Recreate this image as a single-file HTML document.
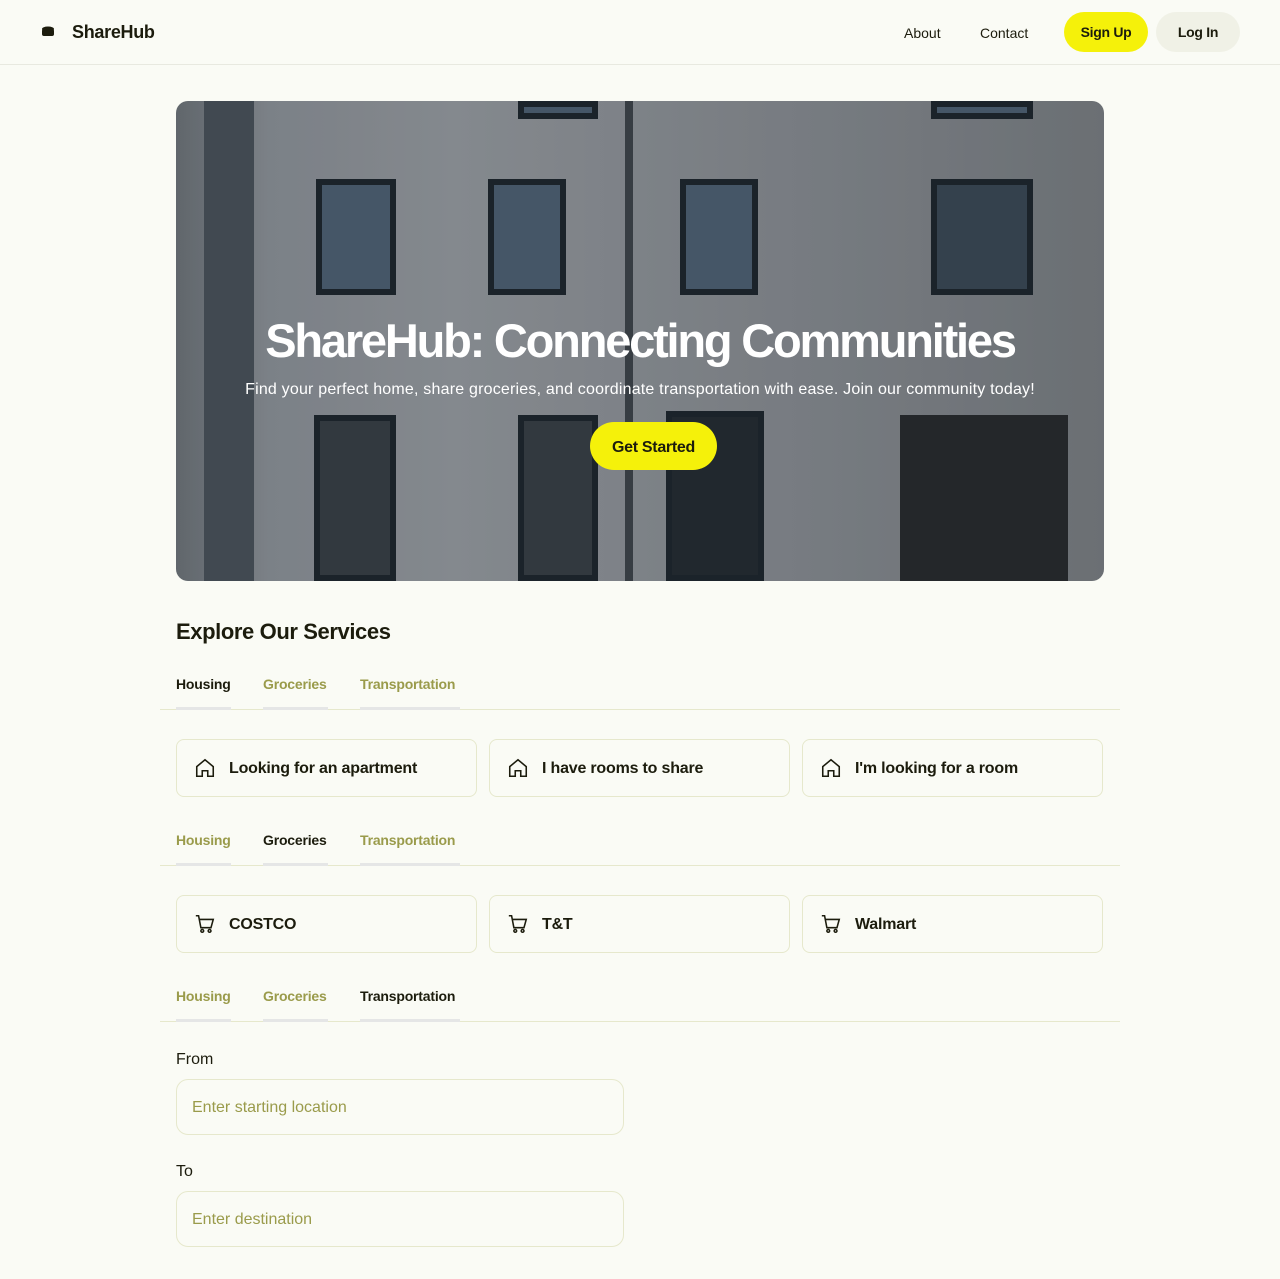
<!DOCTYPE html>
<html><head><meta charset="utf-8"><style>
*{box-sizing:border-box;margin:0;padding:0}
body{width:1280px;height:1279px;background:#fafbf5;font-family:"Liberation Sans",sans-serif;color:#1c1c0d;position:relative;overflow:hidden}
.hdr{height:65px;border-bottom:1px solid #e8e9e0;position:relative}
.logo{position:absolute;left:72px;top:22px;font-weight:bold;font-size:18px;letter-spacing:-0.3px}
.nav{position:absolute;top:25px;font-size:14px}
.btn{position:absolute;top:12px;height:40px;border-radius:20px;font-weight:bold;font-size:14px;display:flex;align-items:center;justify-content:center;letter-spacing:-0.3px}
.hero{position:absolute;left:176px;top:101px;width:928px;height:480px;border-radius:12px;overflow:hidden;background:linear-gradient(90deg,#6e757b 0,#8d939a 10%,#979ca2 30%,#8d9298 55%,#858a90 75%,#7a7f84 100%)}
.w{position:absolute;background:#4f6276;border:6px solid #1f2830}
.ov{position:absolute;inset:0;background:rgba(0,0,0,.12)}
h1{position:absolute;left:0;right:0;top:212px;text-align:center;color:#fff;font-size:47px;letter-spacing:-2.2px;font-weight:bold}
.sub{position:absolute;left:0;right:0;top:280px;text-align:center;color:#fff;font-size:16px;letter-spacing:0.2px}
.gs{position:absolute;left:414px;top:321px;width:127px;height:48px;border-radius:24px;background:#f5f10a;font-weight:bold;font-size:16px;display:flex;align-items:center;justify-content:center;padding-top:4px;letter-spacing:-0.3px}
h2{position:absolute;left:176px;top:619px;font-size:22px;font-weight:bold;letter-spacing:-0.4px}
.tabs{position:absolute;left:160px;width:960px;height:40px;border-bottom:1px solid #e6e8cc}
.t{position:absolute;top:6px;font-size:14px;font-weight:bold;color:#9a9b4b;height:34px;border-bottom:3px solid #e5e6e6;letter-spacing:-0.2px}
.t.a{color:#1c1c0d}
.card{position:absolute;width:301px;height:58px;border:1px solid #e6e8cc;border-radius:8px;display:flex;align-items:center;padding-left:17px;padding-top:2px;font-weight:bold;font-size:16px;letter-spacing:-0.2px}
.card svg{margin-right:13px;margin-top:-2px}
.lbl{position:absolute;left:176px;font-size:16px}
.inp{position:absolute;left:176px;width:448px;height:56px;border:1px solid #e6e8cc;border-radius:12px;color:#9a9b4b;font-size:16px;padding:19px 15px}
</style></head><body>
<div class="hdr">
<svg style="position:absolute;left:42px;top:26px" width="12" height="12" viewBox="0 0 12 12"><ellipse cx="6" cy="3" rx="6" ry="2.5" fill="#1c1c0d"/><rect x="0" y="3" width="12" height="7" rx="2" fill="#1c1c0d"/></svg>
<div class="logo">ShareHub</div>
<div class="nav" style="left:904px">About</div>
<div class="nav" style="left:980px">Contact</div>
<div class="btn" style="left:1064px;width:84px;background:#f5f10a">Sign Up</div>
<div class="btn" style="left:1156px;width:84px;background:#f0f1e6">Log In</div>
</div>
<div class="hero">
<div style="position:absolute;left:28px;top:0;width:50px;height:480px;background:#4b545d"></div>
<div style="position:absolute;left:449px;top:0;width:8px;height:480px;background:#3f464d"></div>
<div class="w" style="left:140px;top:78px;width:80px;height:116px"></div>
<div class="w" style="left:312px;top:78px;width:78px;height:116px"></div>
<div class="w" style="left:504px;top:78px;width:78px;height:116px"></div>
<div class="w" style="left:755px;top:78px;width:102px;height:116px;background:#3c4a58"></div>
<div class="w" style="left:342px;top:0;width:80px;height:18px"></div>
<div class="w" style="left:755px;top:0;width:102px;height:18px"></div>
<div class="w" style="left:138px;top:314px;width:82px;height:166px;background:#3a4148"></div>
<div class="w" style="left:342px;top:314px;width:80px;height:166px;background:#3a4148"></div>
<div class="w" style="left:490px;top:310px;width:98px;height:170px;background:#262e35"></div>
<div style="position:absolute;left:724px;top:314px;width:168px;height:166px;background:#2a2d30"></div>
<div class="ov"></div>
<h1>ShareHub: Connecting Communities</h1>
<div class="sub">Find your perfect home, share groceries, and coordinate transportation with ease. Join our community today!</div>
<div class="gs">Get Started</div>
</div>
<h2>Explore Our Services</h2>

<div class="tabs" style="top:670px"><div class="t a" style="left:16px;width:55px">Housing</div><div class="t" style="left:103px;width:65px">Groceries</div><div class="t" style="left:200px;width:100px">Transportation</div></div>
<div class="card" style="left:176px;top:739px"><svg width="22" height="22" viewBox="0 0 24 24" fill="none" stroke="#1c1c0d" stroke-width="1.7"><path d="M3 10.5L12 3l9 7.5V21h-6v-6H9v6H3z"/></svg>Looking for an apartment</div>
<div class="card" style="left:489px;top:739px"><svg width="22" height="22" viewBox="0 0 24 24" fill="none" stroke="#1c1c0d" stroke-width="1.7"><path d="M3 10.5L12 3l9 7.5V21h-6v-6H9v6H3z"/></svg>I have rooms to share</div>
<div class="card" style="left:802px;top:739px"><svg width="22" height="22" viewBox="0 0 24 24" fill="none" stroke="#1c1c0d" stroke-width="1.7"><path d="M3 10.5L12 3l9 7.5V21h-6v-6H9v6H3z"/></svg>I'm looking for a room</div>

<div class="tabs" style="top:826px"><div class="t" style="left:16px;width:55px">Housing</div><div class="t a" style="left:103px;width:65px">Groceries</div><div class="t" style="left:200px;width:100px">Transportation</div></div>
<div class="card" style="left:176px;top:895px"><svg width="22" height="22" viewBox="0 0 24 24" fill="none" stroke="#1c1c0d" stroke-width="1.7"><path d="M2 3h3l2.5 13h11L21 7H6"/><circle cx="9" cy="19.5" r="1.5"/><circle cx="17" cy="19.5" r="1.5"/></svg>COSTCO</div>
<div class="card" style="left:489px;top:895px"><svg width="22" height="22" viewBox="0 0 24 24" fill="none" stroke="#1c1c0d" stroke-width="1.7"><path d="M2 3h3l2.5 13h11L21 7H6"/><circle cx="9" cy="19.5" r="1.5"/><circle cx="17" cy="19.5" r="1.5"/></svg>T&amp;T</div>
<div class="card" style="left:802px;top:895px"><svg width="22" height="22" viewBox="0 0 24 24" fill="none" stroke="#1c1c0d" stroke-width="1.7"><path d="M2 3h3l2.5 13h11L21 7H6"/><circle cx="9" cy="19.5" r="1.5"/><circle cx="17" cy="19.5" r="1.5"/></svg>Walmart</div>

<div class="tabs" style="top:982px"><div class="t" style="left:16px;width:55px">Housing</div><div class="t" style="left:103px;width:65px">Groceries</div><div class="t a" style="left:200px;width:100px">Transportation</div></div>
<div class="lbl" style="top:1051px">From</div>
<div class="inp" style="top:1079px">Enter starting location</div>
<div class="lbl" style="top:1163px">To</div>
<div class="inp" style="top:1191px">Enter destination</div>
</body></html>
